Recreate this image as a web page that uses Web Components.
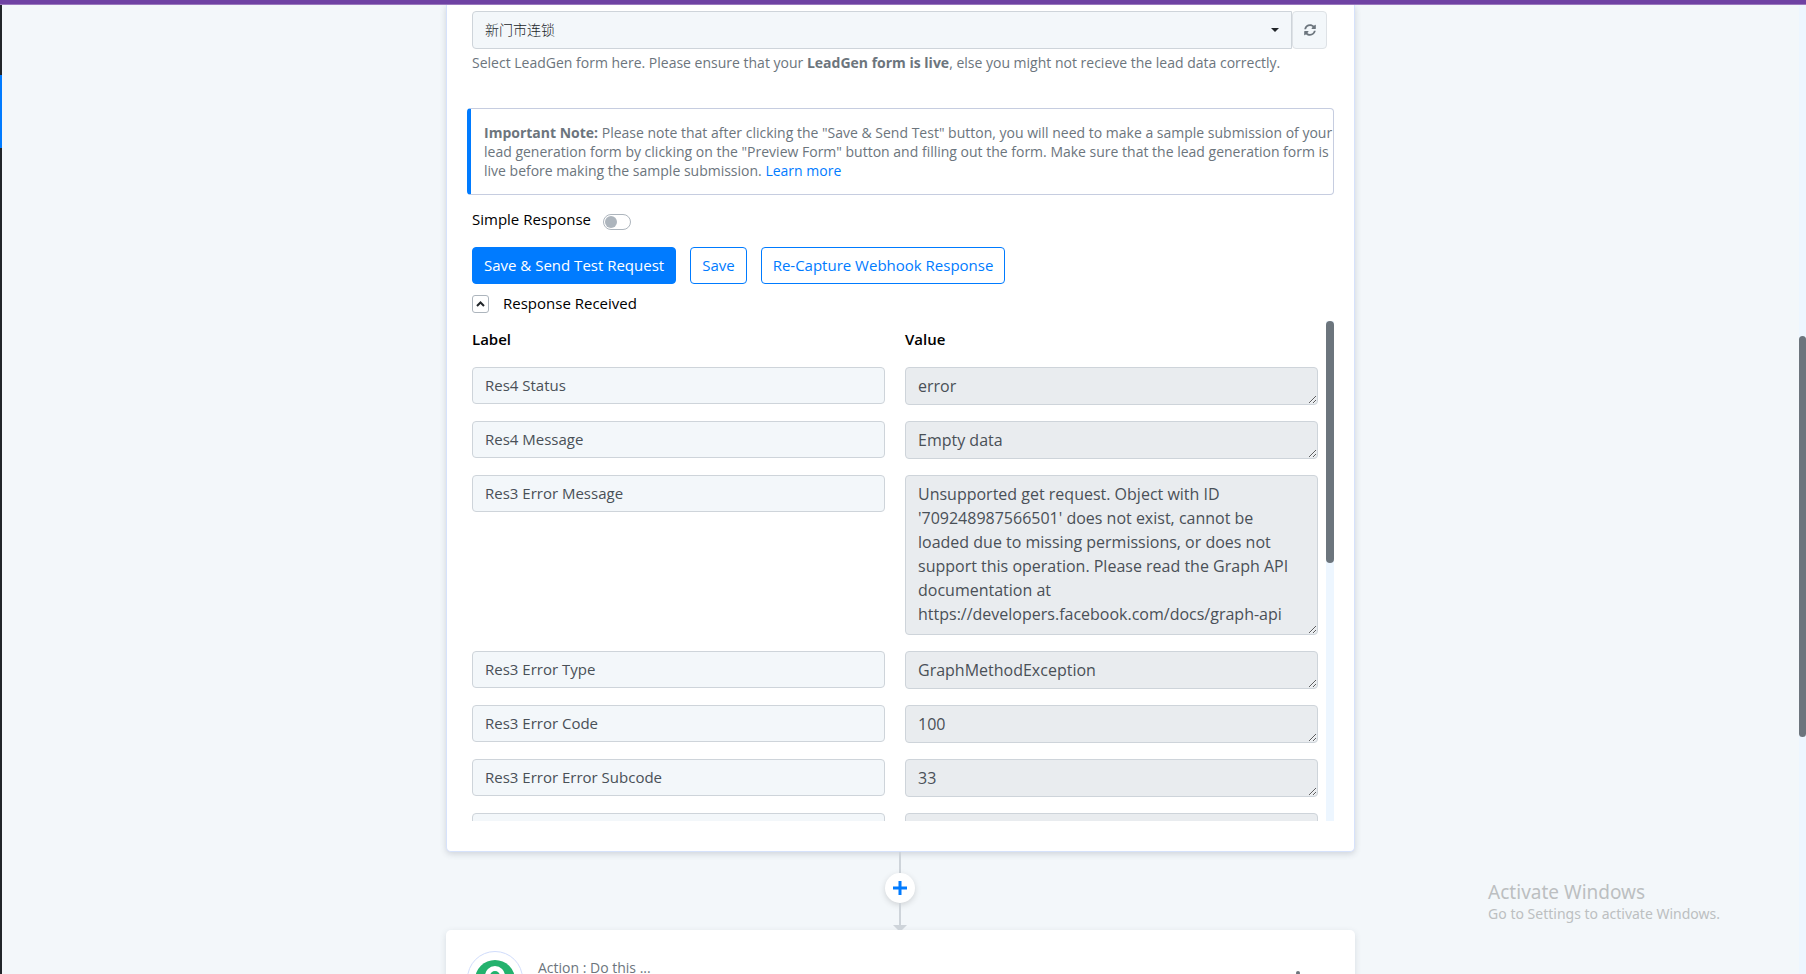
<!DOCTYPE html>
<html lang="en">
<head>
<meta charset="utf-8">
<title>Workflow editor</title>
<style>
  html, body { margin: 0; height: 100%; }
  body {
    overflow: hidden;
    background: #f3f7fa;
    color: #000;
    font: 15px/24px "Open Sans", "Noto Sans CJK SC", sans-serif;
  }
</style>
</head>
<body>
<workflow-app></workflow-app>

<script>
const define = (name, html, setup) => {
  const template = document.createElement('template');
  template.innerHTML = '<style>*{box-sizing:border-box}</style>' + html;
  customElements.define(name, class extends HTMLElement {
    constructor() {
      super();
      this.attachShadow({ mode: 'open' }).append(template.content.cloneNode(true));
    }
    connectedCallback() {
      if (setup) setup(this, this.shadowRoot);
    }
  });
};

/* Slim scrollbar: track with a rounded thumb */
define('slim-scrollbar', `
  <style>
    :host { display: flex; flex-direction: column; background: #edf6ff; }
    div { flex: none; border-radius: 4px; background: #6c757d; }
  </style>
  <div></div>
`, (el, root) => {
  const thumb = root.querySelector('div');
  thumb.style.height = el.getAttribute('size');
  thumb.style.marginTop = el.getAttribute('offset') || '0';
});

define('form-picker', `
  <style>
    :host { display: block; }
    .group { display: flex; }
    .field { flex: 1; display: grid; }
    .field > * { grid-area: 1 / 1; }
    select {
      appearance: none; height: 38px; padding: 0 12px; margin: 0;
      border: 1px solid #ced4da; border-radius: 4px 0 0 4px;
      background: #f3f7fa; color: #212529; font: inherit; font-size: 14px; font-weight: 300;
    }
    .caret { place-self: center end; margin-right: 13px; pointer-events: none; }
    button {
      display: grid; place-items: center; width: 35px; height: 38px; padding: 0;
      border: 1px solid #dee2e6; border-radius: 4px; background: #f3f7fa; color: #6c757d;
    }
    p { margin: 4px 0 0; font-size: 14px; line-height: 20px; color: #6c757d; }
  </style>
  <div class="group">
    <div class="field">
      <select aria-label="LeadGen form"><option>新门市连锁</option></select>
      <svg class="caret" width="8" height="4" viewBox="0 0 8 4"><path d="M0 0h8L4 4z" fill="#212529"/></svg>
    </div>
    <button type="button" aria-label="Refresh forms">
      <svg width="12" height="12" viewBox="0 0 512 512" fill="currentColor">
        <path d="M370.7 133.3C339.500 104 298.900 88 255.800 88c-77.500.1-144.300 53.200-162.800 126.900-1.300 5.400-6.100 9.200-11.700 9.200H24.100c-7.500 0-13.200-6.800-11.800-14.200C33.900 94.900 134.800 8 256 8c66.400 0 126.800 26.100 171.300 68.700L463 41c15.100-15.100 41-4.400 41 17v134c0 13.300-10.700 24-24 24H346c-21.400 0-32.100-25.900-17-41l41.700-41.700zM32 296h134c21.400 0 32.100 25.900 17 41l-41.800 41.800c31.300 29.300 71.800 45.300 114.900 45.300 77.400-.1 144.300-53.100 162.800-126.800 1.300-5.400 6.100-9.200 11.700-9.200h57.300c7.500 0 13.200 6.800 11.800 14.200C478.100 417.100 377.200 504 256 504c-66.400 0-126.800-26.100-171.300-68.700L49 471c-15.100 15.100-41 4.400-41-17V320c0-13.300 10.700-24 24-24z"/>
      </svg>
    </button>
  </div>
  <p><slot></slot></p>
`);

define('note-box', `
  <style>
    :host {
      display: block; padding: 14px 0 14px 13px;
      border: 1px solid #c6cde0; border-left: 4px solid #007bff; border-radius: 4px;
      color: #6c757d; font-size: 14px; line-height: 19px;
    }
  </style>
  <slot></slot>
`);

define('toggle-switch', `
  <style>
    :host { display: flex; align-items: flex-end; gap: 12px; }
    input {
      appearance: none; display: grid; align-items: center;
      width: 28px; height: 16px; margin: 0 0 1px; padding: 0 1px;
      border: 1px solid #adb5bd; border-radius: 8px; background: #fff;
    }
    input::before { content: ""; width: 12px; height: 12px; border-radius: 50%; background: #adb5bd; }
    input:checked::before { justify-self: end; background: #007bff; }
  </style>
  <label for="t"><slot></slot></label>
  <input id="t" type="checkbox">
`);

define('action-button', `
  <style>
    :host { display: block; }
    button {
      display: block; height: 37px; padding: 0 11px 2px;
      border: 1px solid #007bff; border-radius: 4px;
      background: #fff; color: #007bff; font: inherit; white-space: nowrap;
    }
    :host([primary]) button { background: #007bff; color: #fff; font-weight: 500; }
  </style>
  <button type="button"><slot></slot></button>
`);

define('response-row', `
  <style>
    :host { display: grid; grid-template-columns: 1fr 1fr; gap: 20px; align-items: start; }
    input, textarea {
      display: block; width: 100%; margin: 0; border: 1px solid #ced4da; border-radius: 4px;
      color: #495057; font: inherit; outline: none;
    }
    input { height: 37px; padding: 0 12px 1px; background: #f3f7fa; }
    textarea { height: 38px; padding: 6px 12px; background: #e9ecef; font-size: 16px; line-height: 24px; overflow: hidden; resize: both; }
    :host([tall]) textarea { height: 160px; }
  </style>
  <input aria-label="Label" readonly>
  <textarea aria-label="Value" readonly></textarea>
`, (el, root) => {
  root.querySelector('input').value = el.getAttribute('label');
  root.querySelector('textarea').value = el.getAttribute('value');
});

define('response-panel', `
  <style>
    :host { display: block; }
    .toggle { display: flex; align-items: center; gap: 14px; height: 24px; margin-left: 5px; }
    .toggle button {
      display: grid; place-items: center; width: 17px; height: 18px; padding: 0;
      border: 1px solid #adb5bd; border-radius: 3px; background: #fff;
    }
    .toggle span { padding-bottom: 2px; }
    .scroller { display: flex; gap: 8px; height: 500px; margin-top: 5px; overflow: hidden; }
    .rows { flex: 1; display: flex; flex-direction: column; gap: 16px; padding: 6px 0 0 5px; }
    .rows > *, ::slotted(*) { flex: none; }
    .head { display: grid; grid-template-columns: 1fr 1fr; gap: 20px; font-weight: 600; }
    slim-scrollbar { flex: none; width: 8px; }
  </style>
  <div class="toggle">
    <button type="button" aria-label="Collapse response">
      <svg width="9" height="6" viewBox="0 0 9 6" fill="none" stroke="#212529" stroke-width="2"><path d="M1 5l3.500-3.500L8 5"/></svg>
    </button>
    <span>Response Received</span>
  </div>
  <div class="scroller">
    <div class="rows">
      <div class="head"><span>Label</span><span>Value</span></div>
      <slot></slot>
    </div>
    <slim-scrollbar size="242px"></slim-scrollbar>
  </div>
`);

define('step-card', `
  <style>
    :host {
      display: block; padding: 6px 20px 30px;
      border: 1px solid #d6e2fb; border-top: 0; border-radius: 0 0 5px 5px;
      background: #fff; box-shadow: 0 2px 6px rgba(60, 72, 88, .2);
    }
    .inset { margin: 0 7px 0 5px; }
    note-box { margin-top: 35px; }
    toggle-switch { margin: 12px 0 0 5px; }
    .buttons { display: flex; gap: 14px; margin: 16px 0 8px 5px; }
    a { color: #007bff; text-decoration: none; }
  </style>
  <form-picker class="inset">Select LeadGen form here. Please ensure that your <b>LeadGen form is live</b>, else you might not recieve the lead data correctly.</form-picker>
  <note-box><b>Important Note:</b> Please note that after clicking the "Save &amp; Send Test" button, you will need to make a sample submission of your lead generation form by clicking on the "Preview Form" button and filling out the form. Make sure that the lead generation form is live before making the sample submission. <a href="#learn">Learn more</a></note-box>
  <toggle-switch>Simple Response</toggle-switch>
  <div class="buttons">
    <action-button primary>Save &amp; Send Test Request</action-button>
    <action-button>Save</action-button>
    <action-button>Re-Capture Webhook Response</action-button>
  </div>
  <response-panel>
    <response-row label="Res4 Status" value="error"></response-row>
    <response-row label="Res4 Message" value="Empty data"></response-row>
    <response-row tall label="Res3 Error Message" value="Unsupported get request. Object with ID '709248987566501' does not exist, cannot be loaded due to missing permissions, or does not support this operation. Please read the Graph API documentation at https://developers.facebook.com/docs/graph-api"></response-row>
    <response-row label="Res3 Error Type" value="GraphMethodException"></response-row>
    <response-row label="Res3 Error Code" value="100"></response-row>
    <response-row label="Res3 Error Error Subcode" value="33"></response-row>
    <response-row label="" value=""></response-row>
  </response-panel>
`);

define('step-connector', `
  <style>
    :host { display: flex; flex-direction: column; align-items: center; height: 78px; padding-right: 1px; }
    i { width: 2px; height: 21px; background: #ced4da; }
    i.end { height: 22px; }
    button {
      display: grid; place-items: center; width: 30px; height: 30px; padding: 0;
      border: 0; border-radius: 50%; background: #fff; box-shadow: 0 2px 6px rgba(0, 0, 0, .15);
    }
    svg { flex: none; display: block; }
  </style>
  <i></i>
  <button type="button" aria-label="Add step">
    <svg width="14" height="14" viewBox="0 0 14 14" fill="none" stroke="#007bff" stroke-width="3"><path d="M7 0v14M0 7h14"/></svg>
  </button>
  <i class="end"></i>
  <svg width="14" height="5" viewBox="0 0 14 5"><path d="M0 0h14L9 5H5z" fill="#ced4da"/></svg>
`);

define('action-card', `
  <style>
    :host {
      display: flex; align-items: flex-start; padding: 21px; min-height: 98px;
      border-radius: 5px; background: #fff; box-shadow: 0 2px 6px rgba(60, 72, 88, .15);
    }
    .avatar { display: grid; place-items: center; width: 56px; height: 56px; border: 1px solid #d0dcfb; border-radius: 50%; }
    p { flex: 1; margin: 5px 0 0 15px; font-size: 14px; color: #6c757d; }
    button { margin: 18px 34px 0 0; padding: 0; border: 0; background: none; }
    svg { display: block; }
  </style>
  <div class="avatar">
    <svg width="42" height="42" viewBox="0 0 42 42">
      <circle cx="21" cy="22" r="20" fill="#23b26d"/>
      <path d="M21 8a10 10 0 0 1 10 10c0 7-5 10-10 18-5-8-10-11-10-18A10 10 0 0 1 21 8z" fill="#fff"/>
      <circle cx="21" cy="18" r="5" fill="#23b26d"/>
    </svg>
  </div>
  <p>Action : Do this ...</p>
  <button type="button" aria-label="Step menu">
    <svg width="4" height="16" viewBox="0 0 4 16" fill="#6c757d"><circle cx="2" cy="4" r="2"/><circle cx="2" cy="9" r="2"/><circle cx="2" cy="14" r="2"/></svg>
  </button>
`);

define('os-watermark', `
  <style>
    :host { display: block; font-family: "Noto Sans", sans-serif; color: #bcbfc1; pointer-events: none; }
    div { font-size: 19px; line-height: 24px; }
    small { display: block; font-size: 14px; line-height: 20px; }
  </style>
  <div>Activate Windows</div>
  <small>Go to Settings to activate Windows.</small>
`);

define('workflow-app', `
  <style>
    :host { display: flex; flex-direction: column; height: 100vh; overflow: hidden; position: relative; }
    header { flex: none; height: 5px; background: #6f42a3; border-bottom: 1px solid #9a78bd; }
    .body { flex: 1; display: flex; min-height: 0; }
    nav { flex: none; width: 2px; padding-top: 70px; background: #212529; }
    nav a { display: block; height: 73px; background: #007bff; }
    main { flex: 1; overflow: hidden; }
    .column { width: 909px; max-width: 100%; margin: 0 auto; }
    slim-scrollbar { flex: none; width: 7px; }
    os-watermark { position: absolute; right: 86px; bottom: 50px; }
  </style>
  <header></header>
  <div class="body">
    <nav><a href="#workflow" aria-label="Workflow"></a></nav>
    <main>
      <div class="column">
        <step-card></step-card>
        <step-connector></step-connector>
        <action-card></action-card>
      </div>
    </main>
    <slim-scrollbar offset="331px" size="401px"></slim-scrollbar>
  </div>
  <os-watermark></os-watermark>
`);
</script>
</body>
</html>
